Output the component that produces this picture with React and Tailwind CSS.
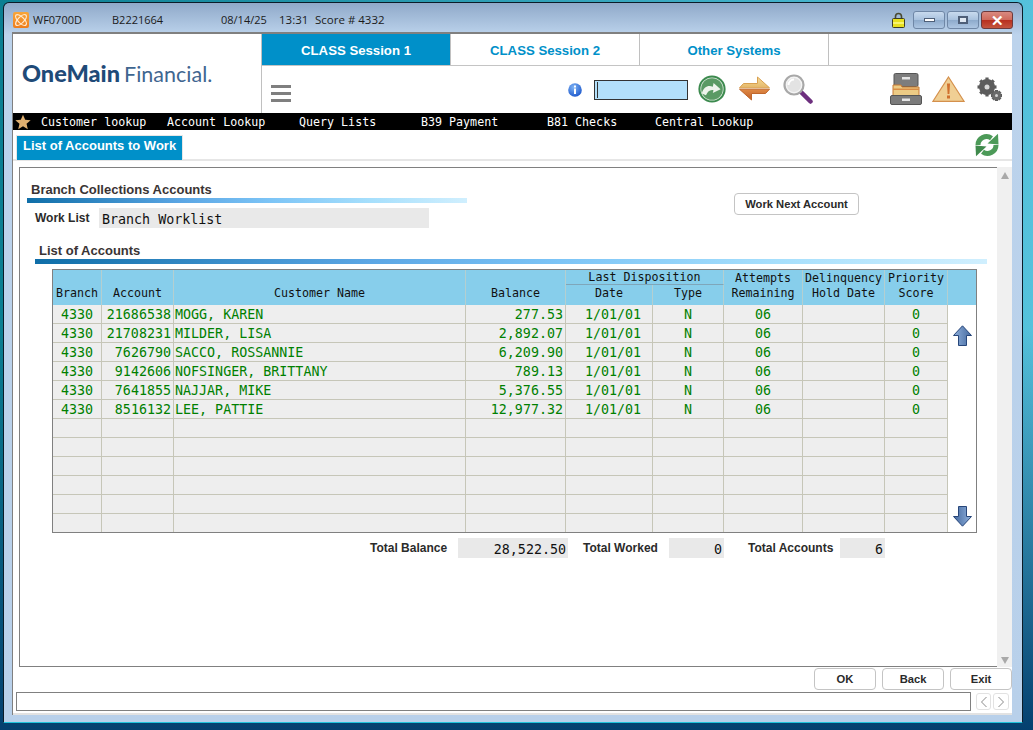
const mono = "font-['DejaVu_Sans_Mono','Liberation_Mono',monospace]";

function AppIcon() {
  return (
    <svg width="16" height="16" viewBox="0 0 16 16">
      <defs>
        <linearGradient id="appg" x1="0" x2="0" y1="0" y2="1">
          <stop offset="0%" stopColor="#f8a63a" />
          <stop offset="100%" stopColor="#ee7d1c" />
        </linearGradient>
      </defs>
      <rect x="0" y="0" width="16" height="16" rx="2" fill="url(#appg)" />
      <g fill="none" stroke="#ffe9cf" strokeWidth="1.3">
        <ellipse cx="8" cy="8" rx="7" ry="3" transform="rotate(45 8 8)" />
        <ellipse cx="8" cy="8" rx="7" ry="3" transform="rotate(-45 8 8)" />
      </g>
    </svg>
  );
}
function Lock() {
  return (
    <svg width="13" height="16" viewBox="0 0 13 16">
      <path d="M3.5 7V4.5a3 3 0 0 1 6 0V7" fill="none" stroke="#4a4a30" strokeWidth="1.6" />
      <rect x="0.5" y="6.5" width="12" height="9" rx="1" fill="#e8e020" stroke="#3c3c28" />
      <rect x="1" y="10" width="11" height="2" fill="#f8f470" />
    </svg>
  );
}
function WinButton({ red, children }) {
  const cls = red
    ? "bg-[linear-gradient(180deg,#d98a80_0%,#cf6a5c_48%,#b8301f_52%,#c4553f_100%)] border-[#6e3a3c]"
    : "bg-[linear-gradient(180deg,#c8daee_0%,#a9c2de_48%,#8eabcc_52%,#adc6e2_100%)] border-[#6f87a6]";
  return (
    <div className={`w-[32px] h-[18px] border rounded-[3px] flex items-center justify-center ${cls}`}>{children}</div>
  );
}
function GreenGo() {
  return (
    <svg width="28" height="28" viewBox="0 0 28 28">
      <circle cx="14" cy="14" r="13.6" fill="#3c8a4e" />
      <circle cx="14" cy="14" r="11.6" fill="#dce9dc" />
      <circle cx="14" cy="14" r="10.8" fill="#5a9a64" />
      <path d="M3.800 18.500c2-6.500 6-8.500 11-6.800l.8-3.700 7 6.200-7.800 3.800.7-2.800c-4-.8-6 1.800-7.500 5z" fill="#eef4ec" />
    </svg>
  );
}
function SwapArrows() {
  return (
    <svg width="31" height="25" viewBox="0 0 31 25">
      <defs>
        <linearGradient id="swt" x1="0" x2="0" y1="0" y2="1">
          <stop offset="0%" stopColor="#f6dc9c" />
          <stop offset="100%" stopColor="#e4b768" />
        </linearGradient>
        <linearGradient id="swb" x1="0" x2="0" y1="0" y2="1">
          <stop offset="0%" stopColor="#e08a45" />
          <stop offset="100%" stopColor="#bf5f2a" />
        </linearGradient>
      </defs>
      <path d="M.5 11.800 L4.500 7.500 L18.500 7.500 L18.500 1 L30.500 11.800z" fill="url(#swt)" stroke="#d9a050" />
      <path d="M30.500 13.200 L26.500 17.500 L12.500 17.500 L12.500 24 L.5 13.200z" fill="url(#swb)" stroke="#c0672c" />
    </svg>
  );
}
function Magnifier() {
  return (
    <svg width="30" height="30" viewBox="0 0 30 30">
      <line x1="17" y1="17" x2="27.500" y2="27.500" stroke="#6d2f7e" strokeWidth="4.500" strokeLinecap="round" />
      <circle cx="11" cy="11" r="9.500" fill="#f4f4f4" stroke="#a8a8a8" strokeWidth="2.200" />
      <circle cx="11" cy="11" r="7" fill="#e3e3e3" />
      <path d="M5.500 11a5.500 5.500 0 0 1 5.500-5.500" fill="none" stroke="#fff" strokeWidth="2" />
    </svg>
  );
}
function Cabinet() {
  return (
    <svg width="32" height="32" viewBox="0 0 32 32">
      <rect x="4" y="0.500" width="24" height="13" rx="1.500" fill="#7d7d7d" stroke="#555" />
      <rect x="12" y="4" width="8" height="2.500" fill="#e6e6e6" />
      <path d="M3 12h8l1 2h17v9H3z" fill="#eccb85" stroke="#c77a35" />
      <rect x="3" y="15.500" width="26" height="1.500" fill="#d98d45" />
      <rect x="0.500" y="22.500" width="31" height="9" rx="1.500" fill="#7b7b7b" stroke="#555" />
      <rect x="12" y="25.500" width="8" height="2.500" fill="#e6e6e6" />
    </svg>
  );
}
function Warning() {
  return (
    <svg width="33" height="26" viewBox="0 0 33 26">
      <path d="M16.500 1 L32 25.300 L1 25.300z" fill="#f0cf94" stroke="#d4904c" strokeWidth="1.200" />
      <path d="M15 7.500h3l-.6 10.500h-1.800z" fill="#d0702e" />
      <rect x="15" y="19.500" width="3" height="3" fill="#d0702e" />
    </svg>
  );
}
function Gears() {
  const teeth = (cx, cy, r1, n) =>
    Array.from({ length: n }, (_, i) => (
      <rect key={i} x={cx - 1.6} y={cy - r1 - 1.500} width="3.200" height="3.500" fill="#5c5c5c" transform={`rotate(${(360 / n) * i} ${cx} ${cy})`} />
    ));
  return (
    <svg width="25" height="24" viewBox="0 0 25 24">
      {teeth(10, 10, 8, 8)}
      <circle cx="10" cy="10" r="8" fill="#5c5c5c" />
      <circle cx="10" cy="10" r="2.500" fill="#d8d8d8" />
      {teeth(19.500, 18.500, 4, 8)}
      <circle cx="19.500" cy="18.500" r="4.300" fill="#6a6a6a" />
      <circle cx="19.500" cy="18.500" r="1.500" fill="#d0d0d0" />
    </svg>
  );
}
function Star() {
  return (
    <svg width="16" height="16" viewBox="0 0 24 24">
      <path d="M12 1l3.300 7.500 8.200.8-6.200 5.400 1.900 8L12 18.500 4.800 22.700l1.900-8L.5 9.300l8.200-.8z" fill="#e0b070" />
    </svg>
  );
}
function Refresh() {
  return (
    <svg width="24" height="24" viewBox="0 0 24 24">
      <path d="M3 12 A8.500 8.500 0 0 1 16.500 5.200" fill="none" stroke="#4c9a58" strokeWidth="5" />
      <path d="M23 .8 L23.500 11.500 L12.500 10.500z" fill="#4c9a58" />
      <path d="M21 12 A8.500 8.500 0 0 1 7.500 18.800" fill="none" stroke="#4c9a58" strokeWidth="5" />
      <path d="M1 23.200 L.5 12.500 L11.500 13.500z" fill="#3f8a4c" />
    </svg>
  );
}
function InfoDot() {
  return (
    <svg width="14" height="14" viewBox="0 0 14 14">
      <defs>
        <radialGradient id="ig" cx="40%" cy="30%" r="80%">
          <stop offset="0%" stopColor="#7fb4f5" />
          <stop offset="100%" stopColor="#1450c8" />
        </radialGradient>
      </defs>
      <circle cx="7" cy="7" r="6.800" fill="url(#ig)" />
      <rect x="6" y="2.500" width="2" height="2" fill="#fff" />
      <rect x="6" y="5.500" width="2" height="5.500" fill="#fff" />
    </svg>
  );
}
function BigArrow({ down }) {
  return (
    <svg width="19" height="21" viewBox="0 0 19 21" className={down ? "rotate-180" : ""}>
      <defs>
        <linearGradient id={down ? "ad" : "au"} x1="0" x2="1" y1="0" y2="0">
          <stop offset="0%" stopColor="#8fb0dc" />
          <stop offset="100%" stopColor="#44699f" />
        </linearGradient>
      </defs>
      <path d="M9.500 .8 L18.500 10.500 L13.500 10.500 L13.500 20.500 L5.500 20.500 L5.500 10.500 L.5 10.500z" fill={`url(#${down ? "ad" : "au"})`} stroke="#27467a" />
    </svg>
  );
}
function Caret({ dir }) {
  return (
    <svg width="8" height="12" viewBox="0 0 8 12">
      <path d={dir === "l" ? "M6.500 1 L1.500 6 L6.500 11" : "M1.500 1 L6.500 6 L1.500 11"} fill="none" stroke="#8a8a8a" strokeWidth="1" />
    </svg>
  );
}

const rows = [
  ["4330", "21686538", "MOGG, KAREN", "277.53"],
  ["4330", "21708231", "MILDER, LISA", "2,892.07"],
  ["4330", "7626790", "SACCO, ROSSANNIE", "6,209.90"],
  ["4330", "9142606", "NOFSINGER, BRITTANY", "789.13"],
  ["4330", "7641855", "NAJJAR, MIKE", "5,376.55"],
  ["4330", "8516132", "LEE, PATTIE", "12,977.32"],
];
const widths = [49, 72, 292, 100, 87, 71, 79, 82, 63, 28];
const td = "h-[19px] p-0 pt-[2px] align-top border-r border-b border-[#c6c6b8] bg-[#eeeeee] text-[13.33px] leading-[16px] text-[#008000] whitespace-nowrap overflow-hidden";
const th = "p-0 font-normal bg-[#87ceeb] border-r border-[#b4cfd0] text-[11.67px] text-[#111] text-center whitespace-nowrap";
const thTop = `${th} h-[15px] leading-[13px] pt-[1px] align-bottom`;
const thLow = `${th} h-[20px] leading-[14px] pb-[5px] align-bottom`;

function AccountsTable() {
  const blanks = Array.from({ length: 12 }, (_, i) => rows[i] || ["", "", "", ""]);
  return (
    <div className="ml-[32px] mt-[5px] w-[925px] h-[264px] border border-[#808080] overflow-hidden">
      <table className={`${mono} table-fixed w-[923px] border-separate border-spacing-0`}>
        <colgroup>
          {widths.map((w, i) => (
            <col key={i} style={{ width: w }} />
          ))}
        </colgroup>
        <thead>
          <tr>
            <th rowSpan={2} className={thLow}>Branch</th>
            <th rowSpan={2} className={thLow}>Account</th>
            <th rowSpan={2} className={thLow}>Customer Name</th>
            <th rowSpan={2} className={`${thLow} text-right pr-[25px]`}>Balance</th>
            <th colSpan={2} className={`${thTop} border-b border-b-[#7fa6ba]`}>Last Disposition</th>
            <th className={thTop}>Attempts</th>
            <th className={thTop}>Delinquency</th>
            <th className={thTop}>Priority</th>
            <th rowSpan={2} className="p-0 bg-[#87ceeb]"></th>
          </tr>
          <tr>
            <th className={thLow}>Date</th>
            <th className={thLow}>Type</th>
            <th className={thLow}>Remaining</th>
            <th className={thLow}>Hold Date</th>
            <th className={thLow}>Score</th>
          </tr>
        </thead>
        <tbody>
          {blanks.map((r, i) => {
            const has = Boolean(r[0]);
            return (
              <tr key={i}>
                <td className={`${td} text-center`}>{r[0]}</td>
                <td className={`${td} text-right pr-[2px]`}>{r[1]}</td>
                <td className={`${td} pl-[1px]`}>{r[2]}</td>
                <td className={`${td} text-right pr-[2px]`}>{r[3]}</td>
                <td className={`${td} text-center pl-[8px]`}>{has ? "1/01/01" : ""}</td>
                <td className={`${td} text-center`}>{has ? "N" : ""}</td>
                <td className={`${td} text-center`}>{has ? "06" : ""}</td>
                <td className={td}></td>
                <td className={`${td} text-center`}>{has ? "0" : ""}</td>
                {i === 0 && (
                  <td rowSpan={12} className="p-0 bg-white align-top">
                    <div className="h-[228px] pt-[20px] pb-[6px] flex flex-col items-center justify-between">
                      <BigArrow />
                      <BigArrow down />
                    </div>
                  </td>
                )}
              </tr>
            );
          })}
        </tbody>
      </table>
    </div>
  );
}

const label = "font-['Liberation_Sans',Arial,sans-serif] font-bold text-[12px] leading-[20px] text-[#2b2b2b]";
const heading = "font-['Liberation_Sans',Arial,sans-serif] font-bold text-[13px] leading-[16px] text-[#3a3434]";
const bar = "h-[5px] bg-[linear-gradient(90deg,#0f6ea8_0%,#5ba6e4_35%,#7cc4f6_55%,#a6dffc_78%,#d0effe_100%)]";
const field = `${mono} bg-[#e9e9e9] h-[20px] text-[13.33px] leading-[24px] text-[#111]`;
const actionBtn = "w-[62px] h-[22px] bg-white border border-[#c4c4c4] rounded-[4px] font-['Liberation_Sans',Arial,sans-serif] font-bold text-[11.2px] text-[#2a2a2a]";

export default function App() {
  return (
    <div className="w-[1033px] h-[730px] overflow-hidden pl-[3px] pt-[2px] pr-[10px] pb-[7px] bg-[linear-gradient(180deg,transparent_45%,#04406f_100%),linear-gradient(90deg,#0b7f92,#55c2dc)]">
      <div className="h-full flex flex-col border border-[#0b1c28] rounded-t-[6px] border-b-[#1fc4dc] bg-[linear-gradient(180deg,#8fa9c9_0px,#bcd3ec_32px,#b8d0ea_100%)] pl-[8px] pr-[10px]">
        {/* title bar */}
        <div className="h-[29px] shrink-0 flex items-center pt-[5px] font-['Open_Sans',sans-serif] text-[11px] text-[#1b1b1b]">
          <div className="ml-[1px] w-[20px]"><AppIcon /></div>
          <span className="w-[79px]">WF0700D</span>
          <span className="w-[109px]">B2221664</span>
          <span className="w-[58px]">08/14/25</span>
          <span className="w-[36px] text-[11.5px]">13:31</span>
          <span className="text-[11.5px]">Score # 4332</span>
          <div className="ml-auto mr-[-1px] flex items-center">
            <Lock />
            <div className="ml-[8px] flex gap-[2px]">
              <WinButton><div className="w-[11px] h-[4px] bg-white border border-[#4e5f78]" /></WinButton>
              <WinButton><div className="w-[10px] h-[8px] bg-[#dfe8f2] border-2 border-[#4e5f78]" /></WinButton>
              <WinButton red><span className="font-['Liberation_Sans',sans-serif] font-bold text-[15px] leading-none text-white">✕</span></WinButton>
            </div>
          </div>
        </div>

        {/* content */}
        <div className="flex-1 min-h-0 flex flex-col bg-white border-l border-t-2 border-[#808080] border-b-0">
          <div className="h-[79px] shrink-0 flex">
            <div className="w-[249px] shrink-0 border-r border-[#c0c0c0] pl-[9px] pt-[24px]">
              <div className="font-['Lato',sans-serif] leading-[30px] whitespace-nowrap">
                <span className="font-black text-[23.5px] text-[#1f4a78]">OneMain</span>
                <span className="ml-[4px] text-[21.5px] text-[#3f6690]">Financial.</span>
              </div>
            </div>
            <div className="flex-1 flex flex-col">
              <div className="h-[32px] shrink-0 flex border-b border-[#c4c4c4] font-['Liberation_Sans',Arial,sans-serif] font-bold text-[13.2px]">
                <div className="w-[189px] bg-[#0090c9] text-white flex items-center justify-center pt-[3px] border-r border-[#c0c0c0]">CLASS Session 1</div>
                <div className="w-[189px] text-[#0090c9] flex items-center justify-center pt-[3px] border-r border-[#c0c0c0]">CLASS Session 2</div>
                <div className="w-[189px] text-[#0090c9] flex items-center justify-center pt-[3px] border-r border-[#c0c0c0]">Other Systems</div>
              </div>
              <div className="flex-1 flex items-start">
                <div className="ml-[9px] mt-[19px] w-[20px] flex flex-col gap-[4px]">
                  <div className="h-[3px] bg-[#7f7f7f]" />
                  <div className="h-[3px] bg-[#7f7f7f]" />
                  <div className="h-[3px] bg-[#7f7f7f]" />
                </div>
                <div className="ml-[277px] mt-[17px]"><InfoDot /></div>
                <div className="ml-[12px] mt-[14px] w-[94px] h-[20px] border border-[#333] bg-[#b3e0fb] pl-[2px] py-[1px]">
                  <div className="w-[1px] h-full bg-[#333]" />
                </div>
                <div className="ml-[10px] mt-[9px]"><GreenGo /></div>
                <div className="ml-[13px] mt-[10px]"><SwapArrows /></div>
                <div className="ml-[13px] mt-[8px]"><Magnifier /></div>
                <div className="ml-[77px] mt-[7px]"><Cabinet /></div>
                <div className="ml-[10px] mt-[10px]"><Warning /></div>
                <div className="ml-[12px] mt-[11px]"><Gears /></div>
              </div>
            </div>
          </div>

          {/* nav */}
          <div className={`${mono} h-[17px] shrink-0 bg-black text-white text-[11.67px] leading-[19px] flex items-start whitespace-nowrap`}>
            <div className="ml-[2px] w-[26px] mt-[1px]"><Star /></div>
            <span className="w-[126px]">Customer lookup</span>
            <span className="w-[132px]">Account Lookup</span>
            <span className="w-[122px]">Query Lists</span>
            <span className="w-[126px]">B39 Payment</span>
            <span className="w-[108px]">B81 Checks</span>
            <span>Central Lookup</span>
          </div>

          {/* page title */}
          <div className="h-[31px] shrink-0 flex items-start justify-between border-b-2 border-[#e6e6e6]">
            <div className="ml-[3px] mt-[5px] w-[167px] border-t border-r border-l border-[#e6e6e6]">
              <div className="h-[24px] bg-[#0090c9] text-white font-['Liberation_Sans',Arial,sans-serif] font-bold text-[13px] leading-[20px] pl-[6px] whitespace-nowrap">List of Accounts to Work</div>
            </div>
            <div className="mt-[3px] mr-[13px]"><Refresh /></div>
          </div>

          {/* panel + scrollbar */}
          <div className="mt-[6px] h-[500px] shrink-0 flex pl-[6px]">
            <div className="w-[978px] border-l border-t border-b border-[#808080]">
              <div className="flex h-[60px]">
                <div className="w-[447px] pl-[7px] pt-[14px]">
                  <div className={`${heading} h-[16px] pl-[4px]`}>Branch Collections Accounts</div>
                  <div className={bar} />
                  <div className="flex mt-[5px]">
                    <div className={`${label} w-[72px] pl-[8px]`}>Work List</div>
                    <div className={`${field} w-[330px] pl-[3px]`}>Branch Worklist</div>
                  </div>
                </div>
                <button className="ml-[267px] mt-[25px] w-[125px] h-[22px] bg-white border border-[#c4c4c4] rounded-[4px] font-['Liberation_Sans',Arial,sans-serif] font-bold text-[11.2px] text-[#2a2a2a]">Work Next Account</button>
              </div>

              <div className="mt-[15px] ml-[15px]">
                <div className={`${heading} h-[16px] pl-[4px]`}>List of Accounts</div>
                <div className={`${bar} w-[952px]`} />
              </div>

              <AccountsTable />

              <div className="mt-[5px] ml-[350px] flex whitespace-nowrap">
                <div className={`${label} w-[88px]`}>Total Balance</div>
                <div className={`${field} w-[110px] text-right pr-[2px]`}>28,522.50</div>
                <div className={`${label} ml-[15px] w-[86px]`}>Total Worked</div>
                <div className={`${field} w-[55px] text-right pr-[2px]`}>0</div>
                <div className={`${label} ml-[24px] w-[92px]`}>Total Accounts</div>
                <div className={`${field} w-[45px] text-right pr-[2px]`}>6</div>
              </div>
            </div>
            <div className="flex-1 bg-[#f0f0f0] flex flex-col items-center justify-between pt-[5px] pb-[3px]">
              <div className="w-0 h-0 border-l-[4px] border-r-[4px] border-b-[7px] border-l-transparent border-r-transparent border-b-[#a9a9a9]" />
              <div className="w-0 h-0 border-l-[4px] border-r-[4px] border-t-[7px] border-l-transparent border-r-transparent border-t-[#a9a9a9]" />
            </div>
          </div>

          {/* action buttons */}
          <div className="mt-[1px] h-[22px] shrink-0 flex justify-end gap-[6px]">
            <button className={actionBtn}>OK</button>
            <button className={actionBtn}>Back</button>
            <button className={actionBtn}>Exit</button>
          </div>

          {/* status */}
          <div className="mt-[2px] shrink-0 flex items-center pl-[3px]">
            <div className="w-[955px] h-[19px] border border-[#808080] bg-white" />
            <div className="ml-[5px] flex gap-[2px]">
              <div className="w-[15px] h-[17px] border border-[#e2e2e2] rounded-[3px] flex items-center justify-center"><Caret dir="l" /></div>
              <div className="w-[16px] h-[17px] border border-[#e2e2e2] rounded-[3px] flex items-center justify-center"><Caret dir="r" /></div>
            </div>
          </div>
          <div className="flex-1 border-b-2 border-[#e2e2e2]" />
        </div>
        <div className="h-[7px] shrink-0" />
      </div>
    </div>
  );
}
